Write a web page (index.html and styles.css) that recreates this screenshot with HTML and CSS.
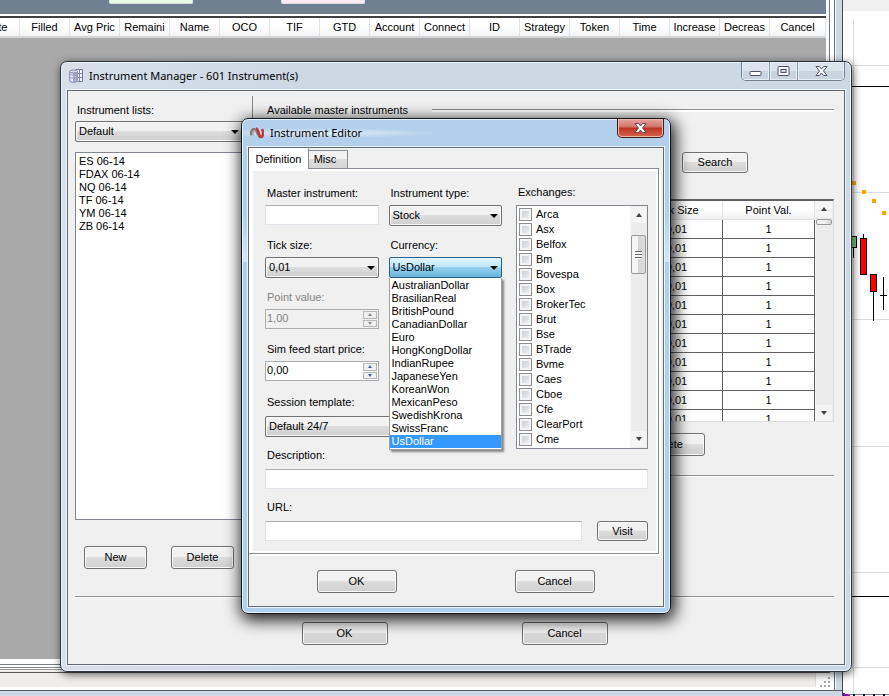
FILE: index.html
```html
<!DOCTYPE html>
<html lang="en">
<head>
<meta charset="utf-8">
<title>Instrument Manager</title>
<link rel="stylesheet" href="styles.css">
</head>
<body>
<div class="desktop">
  <div class="backdrop">
    <section class="orders">
      <div class="toolbar"><button class="stub buy" aria-label="Buy"></button><button class="stub sell" aria-label="Sell"></button></div>
      <div class="orders-view">
        <table class="orders-table">
          <thead><tr><th>State</th><th>Filled</th><th>Avg Pric</th><th>Remaini</th><th>Name</th><th>OCO</th><th>TIF</th><th>GTD</th><th>Account</th><th>Connect</th><th>ID</th><th>Strategy</th><th>Token</th><th>Time</th><th>Increase</th><th>Decreas</th><th class="last">Cancel</th></tr></thead>
        </table>
      </div>
      <div class="lines"></div>
      <div class="status"><div class="status-cell"></div>
        <svg class="grip" width="12" height="12" viewBox="0 0 12 12" fill="#aaa5a0"><path d="M8 0h2v2h-2zM4 4h2v2h-2zM8 4h2v2h-2zM0 8h2v2h-2zM4 8h2v2h-2zM8 8h2v2h-2z"/></svg>
      </div>
      <div class="orders-foot"></div>
    </section>
    <div class="chart">
      <svg width="46" height="696" viewBox="843 0 46 696" shape-rendering="crispEdges">
        <rect x="843" y="0" width="46" height="11" fill="#f0f0f0"/>
        <path d="M853.5 19V696M843 65.500H889M843 192.500H889M843 319.500H889M843 446.500H889M843 572.500H889M843 667.500H889" stroke="#dcdcdc" fill="none"/>
        <path d="M843 86.500H889M843 596.500H889" stroke="#000"/>
        <path d="M852 181h4v4h-4zM862 190h4v4h-4zM872 199h4v4h-4zM882 211h4v4h-4z" fill="#ffa500"/>
        <path d="M853.500 248V258M863.500 234V238M873.500 291V321M883.500 277V310M880 295.500H887" stroke="#000"/>
        <rect x="850.500" y="236.500" width="6" height="11" fill="#7cc47c" stroke="#000"/>
        <rect x="860.500" y="238.500" width="6" height="36" fill="#f00" stroke="#000"/>
        <rect x="870.500" y="274.500" width="6" height="17" fill="#f00" stroke="#000"/>
        <path d="M843 694.500H889" stroke="#777"/>
        <path d="M843 695H889" stroke="#00007f" stroke-width="2" stroke-dasharray="2 8"/>
        <path d="M843 694l7 2" stroke="#a000c8" stroke-width="2"/>
      </svg>
    </div>
  </div>

  <section class="window manager">
    <header class="caption">
      <svg width="14" height="14" viewBox="0 0 14 14"><path d="M6.500 .5h7v12h-5" fill="#eef0fa" stroke="#747696"/><path d="M9 4.500h4M9 8.500h4M10.500 1v11" stroke="#8587a8"/><path d="M.5 2.500v9c0 2.500 8 2.500 8 0v-9" fill="#a9abd2" stroke="#8c8eb8"/><path d="M1 4v7.500l3 1.500V4z" fill="#dfe1f4"/><path d="M1 5.500c1 1 6 1 7 0M1 8.500c1 1 6 1 7 0" fill="none" stroke="#9a9cc4"/><ellipse cx="4.500" cy="2.500" rx="4" ry="1.500" fill="#d8daef" stroke="#8587a8"/></svg>
      <h1>Instrument Manager - 601 Instrument(s)</h1>
      <div class="caption-buttons">
        <button aria-label="Minimize"><svg width="13" height="12" viewBox="0 0 13 12"><rect x="1" y="6.500" width="11" height="4" rx="1" fill="#fff" stroke="#4b5063"/></svg></button>
        <button aria-label="Maximize"><svg width="13" height="12" viewBox="0 0 13 12"><rect x="1" y="1.500" width="11" height="9" rx="1" fill="#fff" stroke="#4b5063"/><rect x="4" y="4.500" width="5" height="3" fill="#cdd8e5" stroke="#4b5063"/></svg></button>
        <button class="wide" aria-label="Close"><svg width="13" height="12" viewBox="0 0 13 12"><path d="M1 1.500h3.500l2 2.500 2-2.500H12L8.500 6l3.500 4.500H8.500l-2-2.500-2 2.500H1L4.500 6z" fill="#fff" stroke="#4b5063"/></svg></button>
      </div>
    </header>
    <div class="client">
      <div class="manager-body">
        <div class="lists">
          <label for="lists">Instrument lists:</label>
          <span class="pick"><select id="lists"><option>Default</option></select></span>
          <select class="instrument-list" multiple size="6" aria-label="Instruments"><option>ES 06-14</option><option>FDAX 06-14</option><option>NQ 06-14</option><option>TF 06-14</option><option>YM 06-14</option><option>ZB 06-14</option></select>
          <div class="list-actions"><button class="btn">New</button><button class="btn">Delete</button></div>
        </div>
        <div class="available">
          <h2><span>Available master instruments</span></h2>
          <button class="btn search">Search</button>
          <div class="master">
            <table>
              <thead><tr><th>Name</th><th class="tick">Tick Size</th><th class="point">Point Val.</th></tr></thead>
              <tbody>
                <tr><td></td><td>0,01</td><td>1</td></tr>
                <tr><td></td><td>0,01</td><td>1</td></tr>
                <tr><td></td><td>0,01</td><td>1</td></tr>
                <tr><td></td><td>0,01</td><td>1</td></tr>
                <tr><td></td><td>0,01</td><td>1</td></tr>
                <tr><td></td><td>0,01</td><td>1</td></tr>
                <tr><td></td><td>0,01</td><td>1</td></tr>
                <tr><td></td><td>0,01</td><td>1</td></tr>
                <tr><td></td><td>0,01</td><td>1</td></tr>
                <tr><td></td><td>0,01</td><td>1</td></tr>
                <tr><td></td><td>0,01</td><td>1</td></tr>
              </tbody>
            </table>
            <div class="scroll"><button aria-label="Scroll up"><i class="up"></i></button><div class="thumb short"></div><button class="end" aria-label="Scroll down"><i class="down"></i></button></div>
          </div>
          <button class="btn remove">Delete</button>
          <hr>
        </div>
      </div>
      <footer class="manager-foot"><button class="btn">OK</button><button class="btn">Cancel</button></footer>
    </div>
  </section>

  <section class="window editor">
    <header class="caption">
      <svg width="14" height="12" viewBox="0 0 14 12" fill="none"><path d="M1 8.500C.5 4 3 1 5 2.500S8 9 10.500 10.500" stroke="#8b7773" stroke-width="2.500"/><path d="M3.500 9C2 6 4 2 6 5" stroke="#b5a5a1" stroke-width="1.500"/><path d="M6 1.500c3 .5 2.500 8 5 8.500 2.500 0 2.500-5 1-8" stroke="#c3343c" stroke-width="2.500"/></svg>
      <h1>Instrument Editor</h1>
      <button class="close" aria-label="Close"><svg width="13" height="12" viewBox="0 0 13 12"><path d="M1 1.500h3.500l2 2.500 2-2.500H12L8.500 6l3.500 4.500H8.500l-2-2.500-2 2.500H1L4.500 6z" fill="#fff" stroke="#5b4a58"/></svg></button>
    </header>
    <div class="client">
      <div class="tabs" role="tablist"><button class="tab active" role="tab" aria-selected="true">Definition</button><button class="tab" role="tab">Misc</button></div>
      <form class="pane">
        <div class="upper">
          <div class="fields">
            <div class="field"><label for="master">Master instrument:</label><input class="text" id="master" type="text"></div>
            <div class="field"><label for="type">Instrument type:</label><span class="pick"><select id="type"><option>Stock</option></select></span></div>
            <div class="field"><label for="tick">Tick size:</label><span class="pick"><select id="tick"><option>0,01</option></select></span></div>
            <div class="field"><label for="currency">Currency:</label><span class="pick open"><select id="currency"><option>UsDollar</option></select>
              <ul class="menu" role="listbox" aria-label="Currency"><li role="option">AustralianDollar</li><li role="option">BrasilianReal</li><li role="option">BritishPound</li><li role="option">CanadianDollar</li><li role="option">Euro</li><li role="option">HongKongDollar</li><li role="option">IndianRupee</li><li role="option">JapaneseYen</li><li role="option">KoreanWon</li><li role="option">MexicanPeso</li><li role="option">SwedishKrona</li><li role="option">SwissFranc</li><li role="option" class="selected" aria-selected="true">UsDollar</li></ul></span></div>
            <div class="field first off"><label for="value">Point value:</label><span class="spin"><input id="value" type="text" value="1,00" disabled><span class="steps"><button type="button" aria-label="Increase" disabled><i class="up"></i></button><button type="button" aria-label="Decrease" disabled><i class="down"></i></button></span></span></div>
            <div class="field first"><label for="price">Sim feed start price:</label><span class="spin"><input id="price" type="text" value="0,00"><span class="steps"><button type="button" aria-label="Increase"><i class="up"></i></button><button type="button" aria-label="Decrease"><i class="down"></i></button></span></span></div>
            <div class="field across"><label for="session">Session template:</label><span class="pick"><select id="session"><option>Default 24/7</option></select></span></div>
          </div>
          <fieldset class="exchanges">
            <legend>Exchanges:</legend>
            <div class="check-list">
              <div class="checks">
                <label><input type="checkbox">Arca</label><label><input type="checkbox">Asx</label><label><input type="checkbox">Belfox</label><label><input type="checkbox">Bm</label><label><input type="checkbox">Bovespa</label><label><input type="checkbox">Box</label><label><input type="checkbox">BrokerTec</label><label><input type="checkbox">Brut</label><label><input type="checkbox">Bse</label><label><input type="checkbox">BTrade</label><label><input type="checkbox">Bvme</label><label><input type="checkbox">Caes</label><label><input type="checkbox">Cboe</label><label><input type="checkbox">Cfe</label><label><input type="checkbox">ClearPort</label><label><input type="checkbox">Cme</label>
              </div>
              <div class="scroll"><button type="button" aria-label="Scroll up"><i class="up"></i></button><div class="thumb"></div><button type="button" class="end" aria-label="Scroll down"><i class="down"></i></button></div>
            </div>
          </fieldset>
        </div>
        <div class="field wide"><label for="description">Description:</label><input class="text" id="description" type="text"></div>
        <div class="field wide"><label for="url">URL:</label><div class="url-row"><input class="text" id="url" type="text"><button type="button" class="btn">Visit</button></div></div>
      </form>
      <footer class="editor-foot"><button class="btn">OK</button><button class="btn">Cancel</button></footer>
    </div>
  </section>
</div>
</body>
</html>
```
FILE: styles.css
```css
* { box-sizing: border-box; }

body {
  margin: 0;
  background: #fff;
  color: #000;
  font: 11px/13px "Liberation Sans", Arial, sans-serif;
}

button, input, select { font: inherit; color: inherit; margin: 0; }
h1, h2, ul { margin: 0; padding: 0; font-weight: normal; }
table { border-collapse: separate; border-spacing: 0; }
th { font-weight: normal; }
i { display: block; width: 0; height: 0; border: 3px solid transparent; }
i.up { border-top: 0; border-bottom: 4px solid #444; }
i.down { border-bottom: 0; border-top: 4px solid #444; }

.desktop { position: relative; min-height: 100vh; overflow: hidden; }
.backdrop { display: flex; height: 100vh; min-height: 696px; }

/* Order window */
.orders {
  flex: 1;
  min-width: 0;
  display: flex;
  flex-direction: column;
  border-right: 1px solid #404852;
  box-shadow: inset -6px 0 #cdd8e5, inset -7px 0 #fff, inset -8px 0 #626b76, inset -12px 0 #fff, inset -13px 0 #727a84, inset -15px 0 #f4f6f8;
  padding-right: 16px;
}
.toolbar {
  display: flex;
  gap: 88px;
  height: 14px;
  padding-left: 109px;
  background: #708090;
}
.stub { width: 84px; height: 4px; padding: 0; border: 1px solid #ddd; border-top: 0; border-radius: 0 0 2px 2px; }
.buy { background: #e8fbe8; }
.sell { background: #fdeaf2; }
.orders-view {
  flex: 1;
  margin-top: 2px;
  overflow: hidden;
  background: #a9a9a9;
  border-top: 2px solid #404040;
}
.orders-table { table-layout: fixed; width: 856px; margin-left: -30px; }
.orders-table th {
  width: 50px;
  height: 20px;
  padding: 0;
  text-align: center;
  white-space: nowrap;
  background: linear-gradient(#fff 45%, #f3f4f6);
  border-right: 1px solid #dfe1e4;
  border-bottom: 2px solid #d5d5d5;
}
.orders-table .last { width: 56px; }
.lines { height: 14px; background: linear-gradient(#fff 5px, #777c84 5px 6px, #fff 6px 8px, #888 8px 9px, #fff 9px 10px, #999 10px 11px, #f0edeb 11px 13px, #555 13px); margin-right: -3px; }
.status { display: flex; height: 17px; background: #fff; margin-right: -8px; }
.status-cell { flex: 1; background: #f0edeb; height: 14px; border-right: 1px solid #ddd; }
.grip { margin: 4px 2px 0 4px; }
.orders-foot { height: 6px; margin-right: -16px; background: #cdd8e5; border-top: 1px solid #555d68; }
.chart { width: 46px; overflow: hidden; background: #fff; }
.chart svg { display: block; }

/* Windows */
.window {
  position: absolute;
  z-index: 1;
  display: flex;
  flex-direction: column;
  padding: 0 6px 6px;
  border: 1px solid #2e3640;
  border-radius: 7px;
}
.manager {
  left: 60px;
  top: 61px;
  width: 792px;
  background: linear-gradient(90deg, #d7e0ea, #cdd8e5 30%);
  box-shadow: inset 0 0 0 1px #eef3f8, 1px 2px 8px rgba(0, 0, 0, .65);
}
.editor {
  z-index: 2;
  left: 241px;
  top: 118px;
  width: 430px;
  border-color: #14191f;
  background: radial-gradient(ellipse at 80px 14px, #e2edf8, rgba(226, 237, 248, 0) 120px) no-repeat 0 0 / 100% 28px, linear-gradient(#b2d0ec 0 20%, #d7e6f5 29%, #b1d0ee 29%);
  box-shadow: inset 0 0 0 1px #e4f1fc, 2px 4px 16px 2px rgba(0, 0, 0, .9);
}
.caption { display: flex; align-items: flex-start; height: 28px; padding-left: 2px; }
.caption > svg { margin-top: 7px; }
.caption h1 { flex: 1; padding: 6px 0 0 6px; font: 11px/16px "Noto Sans", sans-serif; }
.editor .caption > svg { margin-top: 8px; }
.caption button { display: flex; align-items: center; justify-content: center; padding: 0; }
.caption-buttons {
  display: flex;
  height: 19px;
  border: 1px solid #77808f;
  border-top: 0;
  border-radius: 0 0 5px 5px;
  overflow: hidden;
}
.caption-buttons button { width: 28px; border: 0; border-right: 1px solid #8f98a6; background: linear-gradient(#dbe3ed 50%, #cad4e0 50%); box-shadow: inset 0 0 0 1px #e7edf4; }
.caption-buttons .wide { width: 46px; border-right: 0; }
.close {
  width: 47px;
  height: 19px;
  border: 1px solid #4a1b1c;
  border-top: 0;
  border-radius: 0 0 5px 5px;
  background: linear-gradient(#e5a79e, #cf7165 45%, #b93420 50%, #d7644e);
  box-shadow: inset 0 0 0 1px #eab7af;
}
.client {
  background: #f0f0f0;
  border: 1px solid #5f6873;
  box-shadow: 0 0 0 1px #edf3f9;
}

.btn {
  height: 23px;
  padding: 0;
  text-align: center;
  border: 1px solid #707070;
  border-radius: 3px;
  background: linear-gradient(#f2f2f2 45%, #dddddd 50%, #cfcfcf);
  box-shadow: inset 0 0 0 1px #fafafa;
}

.pick { position: relative; display: block; }
.pick select {
  appearance: none;
  display: block;
  width: 100%;
  height: 21px;
  padding: 0 3px;
  border: 1px solid #707070;
  border-radius: 2px;
  background: linear-gradient(#f2f2f2 45%, #dddddd 50%, #cfcfcf);
  box-shadow: inset 0 0 0 1px #f8f8f8;
}
.pick::after {
  content: "";
  position: absolute;
  right: 4px;
  top: 9px;
  border: 4px solid transparent;
  border-top-color: #000;
  border-bottom: 0;
}
.pick.open select { border-color: #2c628b; background: linear-gradient(#e3f4fc, #bee6fb 48%, #98d1ef 50%, #68b3db); box-shadow: none; }

/* Manager contents */
.manager-body { display: grid; grid-template-columns: 184px 1fr; border: 0; }
.lists { padding: 10px 9px 27px 7px; }
.lists > label { display: block; padding-left: 2px; line-height: 18px; }
.lists .pick { margin: 2px 0 10px; }
.instrument-list {
  display: block;
  width: 100%;
  height: 368px;
  padding: 2px 1px;
  border: 1px solid #828790;
  border-radius: 0;
  background: #fff;
  overflow: hidden;
}
.instrument-list option { height: 13px; min-height: 13px; padding: 0 2px; line-height: 13px; }
.list-actions { display: flex; gap: 24px; margin: 26px 0 0 9px; }
.list-actions .btn { width: 63px; flex: none; }
.available {
  padding: 10px 10px 0 15px;
  background: linear-gradient(#888, #888) no-repeat 0 5px / 1px 480px;
}
.available h2 { display: flex; align-items: center; gap: 24px; font-size: 11px; line-height: 18px; }
.available h2::after { content: ""; flex: 1; height: 2px; border-top: 1px solid #909090; background: #fff; }
.available .btn { display: block; }
.search { width: 66px; height: 21px; margin: 33px 86px 26px auto; }
.master {
  display: flex;
  height: 223px;
  overflow: hidden;
  background: #fff;
  border: 1px solid #ddd;
  border-top: 2px solid #606060;
}
.master table { flex: 1; table-layout: fixed; }
.master th, .master td { height: 19px; padding: 0; text-align: center; line-height: 16px; border-right: 1px solid #606060; border-bottom: 1px solid #606060; }
.master th { height: 19px; border-color: #dfe1e4; background: linear-gradient(#fff 45%, #f1f2f4); }
.master .tick { width: 92px; }
.master .point { width: 92px; }
.master .scroll { width: 18px; padding-right: 1px; }
.remove { width: 76px; margin: 11px 129px 19px auto; }
.available hr, .manager-foot { border: 0; border-top: 1px solid #909090; box-shadow: inset 0 1px #fff; }
.available hr { height: 2px; margin: 0; }
.manager-foot { display: flex; justify-content: center; gap: 134px; margin: 0 10px 0 7px; padding: 25px 0 19px; }
.manager-foot .btn { width: 86px; }

.scroll { display: flex; flex-direction: column; flex: none; width: 17px; background: #ececec; border-left: 1px solid #f6f6f6; }
.scroll button { display: flex; align-items: center; justify-content: center; width: 100%; height: 16px; padding: 0; border: 0; background: #f5f5f5; }
.scroll .end { margin-top: auto; }
.thumb {
  height: 39px;
  margin: 12px 0 0;
  border: 1px solid #999;
  border-radius: 2px;
  background: repeating-linear-gradient(#666 0 1px, #fff 1px 3px) no-repeat center / 7px 8px, linear-gradient(90deg, #f5f5f5 45%, #d5d5d5 50%, #ddd);
}
.thumb.short { height: 6px; margin-top: 2px; background: linear-gradient(90deg, #f5f5f5 45%, #d5d5d5); }

/* Editor contents */
.tabs { display: flex; align-items: flex-end; height: 21px; position: relative; z-index: 1; margin-bottom: -1px; }
.tab {
  width: 39px;
  height: 19px;
  padding: 0 6px 0 0;
  border: 1px solid #898c95;
  border-left: 0;
  background: linear-gradient(#f2f2f2 45%, #ddd 50%, #d5d5d5);
}
.tab.active { width: 60px; height: 21px; padding: 0; border-bottom: 0; border-top-color: #fff; background: #fff; }
.pane {
  margin: 0 4px 0 0;
  padding: 12px 6px 0 12px;
  border: 1px solid #898c95;
  border-left: 0;
  background: #f0f0f0;
  box-shadow: inset 4px 2px #fff, inset -2px -2px #fff, 2px 2px #fff;
}
.upper { display: flex; gap: 14px; padding: 0 4px 0 4px; }
.fields { flex: 1; display: grid; grid-template-columns: repeat(2, minmax(0, 1fr)); column-gap: 10px; align-content: start; }
.field { height: 52px; padding-top: 3px; }
.field.first { grid-column: 1; }
.field.across { grid-column: 1 / 3; }
.field.across label { height: 24px; line-height: 20px; }
.field label { display: block; height: 21px; padding-left: 2px; line-height: 18px; white-space: nowrap; }
.off { color: #838383; }
.text { display: block; width: 100%; height: 20px; padding: 0 3px; border: 1px solid #e2e3ea; border-top-color: #abadb3; background: #fff; border-radius: 1px; }
.spin { display: flex; height: 20px; border: 1px solid #abadb3; background: #fff; }
.spin input { flex: 1; min-width: 0; padding: 0 1px 2px; border: 0; background: transparent; }
.off .spin { background: #f0f0f0; }
.steps { display: flex; flex-direction: column; width: 15px; padding: 1px 1px 1px 0; gap: 1px; }
.steps button { flex: 1; display: flex; align-items: center; justify-content: center; padding: 0; border: 1px solid #b8b8b8; background: #f0f0f0; }
.steps i { border-width: 2px; }
.steps i.up { border-bottom: 3px solid #4a5fa8; }
.steps i.down { border-top: 3px solid #4a5fa8; }
.off .steps i.up { border-bottom-color: #888; }
.off .steps i.down { border-top-color: #888; }
.menu {
  position: absolute;
  z-index: 2;
  left: 0;
  top: 21px;
  width: 100%;
  padding: 1px 0;
  list-style: none;
  background: #fff;
  border: 1px solid #a0a0a0;
  border-top: 0;
  box-shadow: 2px 2px 2px rgba(0, 0, 0, .45);
}
.menu li { padding: 0 2px; line-height: 13px; }
.menu .selected { background: #39f; color: #fff; }
.exchanges { flex: none; width: 132px; min-width: 0; margin: 0; padding: 0; border: 0; }
.exchanges legend { height: 24px; padding: 2px 0 0 2px; line-height: 18px; }
.check-list { display: flex; height: 244px; background: #fff; border: 1px solid #828790; }
.checks { flex: 1; padding: 1px 2px; }
.checks label { display: flex; align-items: center; gap: 4px; height: 15px; }
.checks input {
  appearance: none;
  width: 13px;
  height: 13px;
  border: 1px solid #8e8f8f;
  background: linear-gradient(135deg, #c3c7d0, #f6f6f6);
  box-shadow: inset 0 0 0 2px #f4f4f4;
}
.check-list .scroll { padding: 1px 1px 1px 0; }
.field.wide { padding: 0 4px; }
.field.wide label { height: 20px; line-height: 12px; }
.url-row { display: flex; gap: 15px; }
.url-row .text { flex: 1; }
.url-row .btn { width: 51px; height: 20px; }
.editor-foot { display: flex; justify-content: center; gap: 118px; padding: 16px 1px 13px 0; }
.editor-foot .btn { width: 80px; }
```
